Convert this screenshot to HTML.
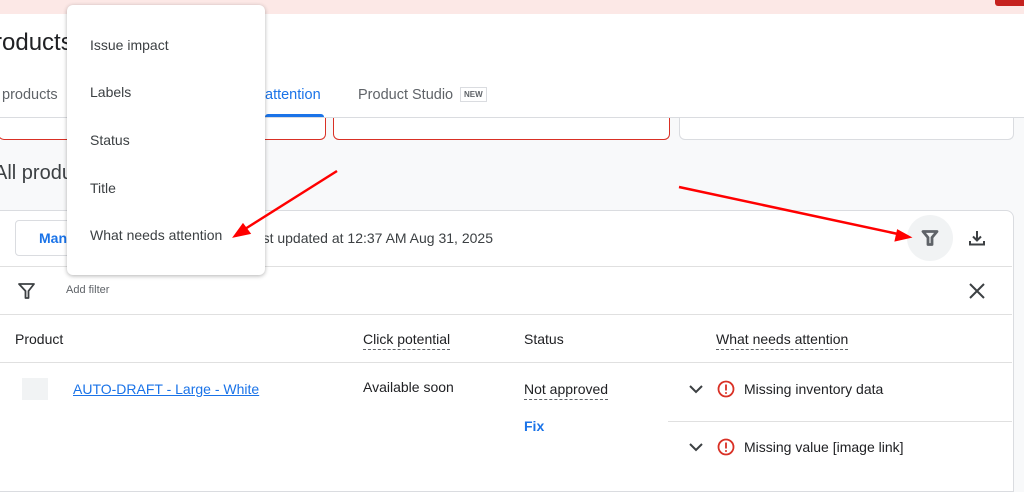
<!DOCTYPE html>
<html><head><style>
body{margin:0;width:1024px;height:478px;overflow:hidden;background:#f8f9fa;font-family:"Liberation Sans",Arial,sans-serif;color:#3c4043;position:relative}
.a{position:absolute}
</style></head><body>
<div class="a" style="left:0;top:0;width:1024px;height:14px;background:#fce8e6"></div>
<div class="a" style="left:995px;top:0;width:29px;height:6px;background:#c5221f;border-radius:0 0 0 3px"></div>
<div class="a" style="left:0;top:14px;width:1024px;height:103px;background:#fff;border-bottom:1px solid #dadce0"></div>
<div class="a" style="left:-6px;top:29px;font-size:24px;color:#202124">roducts</div>
<div class="a" style="left:2px;top:87px;font-size:14.5px;color:#5f6368">products</div>
<div class="a" style="left:265px;top:87px;font-size:14.5px;color:#1a73e8">attention</div>
<div class="a" style="left:265px;top:114px;width:59px;height:3px;background:#1a73e8;border-radius:3px 3px 0 0"></div>
<div class="a" style="left:358px;top:87px;font-size:14.5px;color:#5f6368">Product Studio</div>
<div class="a" style="left:460px;top:87px;font-size:8px;border:1px solid #dadce0;padding:2px 3px;color:#5f6368;font-weight:bold">NEW</div>
<div class="a" style="left:-2px;top:118px;width:326px;height:21px;background:#fff;border:1px solid #d93025;border-top:none;border-radius:0 0 6px 6px"></div>
<div class="a" style="left:333px;top:118px;width:335px;height:21px;background:#fff;border:1px solid #d93025;border-top:none;border-radius:0 0 6px 6px"></div>
<div class="a" style="left:679px;top:118px;width:333px;height:21px;background:#fff;border:1px solid #dadce0;border-top:none;border-radius:0 0 6px 6px"></div>
<div class="a" style="left:-6px;top:162px;font-size:20px;color:#3c4043">All products</div>
<div class="a" style="left:-1px;top:210px;width:1013px;height:280px;background:#fff;border:1px solid #dadce0;border-radius:0 8px 0 0"></div>
<div class="a" style="left:15px;top:220px;width:90px;height:34px;border:1px solid #dadce0;border-radius:4px"></div>
<div class="a" style="left:39px;top:230px;font-size:14px;color:#1a73e8;font-weight:bold">Manage</div>
<div class="a" style="left:247px;top:230px;font-size:14px;color:#3c4043">Last updated at 12:37 AM Aug 31, 2025</div>
<div class="a" style="left:907px;top:215px;width:46px;height:46px;border-radius:50%;background:#f1f3f4"></div>
<svg class="a" style="left:920px;top:228px" width="20" height="20" viewBox="0 0 20 20"><path d="M3 3.5h14l-5 6V16.5h-4v-7z" fill="none" stroke="#5f6368" stroke-width="2.8" stroke-linejoin="round"/></svg>
<svg class="a" style="left:967px;top:228px" width="20" height="20" viewBox="0 0 20 20"><path d="M10 3v9M6 8.5l4 4 4-4M3 13v3.5h14V13" fill="none" stroke="#3c4043" stroke-width="2"/></svg>
<div class="a" style="left:0;top:266px;width:1012px;height:1px;background:#e0e0e0"></div>
<svg class="a" style="left:17px;top:281px" width="20" height="20" viewBox="0 0 20 20"><path d="M2 3h15l-5.5 7V17h-3v-7z" fill="none" stroke="#3c4043" stroke-width="1.8" stroke-linejoin="round"/></svg>
<div class="a" style="left:66px;top:284px;font-size:11px;color:#5f6368">Add filter</div>
<svg class="a" style="left:968px;top:282px" width="18" height="18" viewBox="0 0 18 18"><path d="M2 2l14 14M16 2L2 16" stroke="#3c4043" stroke-width="2"/></svg>
<div class="a" style="left:0;top:314px;width:1012px;height:1px;background:#e0e0e0"></div>
<div class="a" style="left:15px;top:331px;font-size:14px;color:#202124">Product</div>
<div class="a" style="left:363px;top:331px;font-size:14px;color:#202124;border-bottom:1px dashed #5f6368;padding-bottom:2px">Click potential</div>
<div class="a" style="left:524px;top:331px;font-size:14px;color:#202124">Status</div>
<div class="a" style="left:716px;top:331px;font-size:14px;color:#202124;border-bottom:1px dashed #5f6368;padding-bottom:2px">What needs attention</div>
<div class="a" style="left:0;top:362px;width:1012px;height:1px;background:#e0e0e0"></div>
<div class="a" style="left:22px;top:378px;width:26px;height:22px;background:#f1f3f4"></div>
<div class="a" style="left:73px;top:381px;font-size:14px;color:#1a73e8;text-decoration:underline">AUTO-DRAFT - Large - White</div>
<div class="a" style="left:363px;top:379px;font-size:14px;color:#202124">Available soon</div>
<div class="a" style="left:524px;top:381px;font-size:14px;color:#202124;border-bottom:1px dashed #5f6368;padding-bottom:2px">Not approved</div>
<div class="a" style="left:524px;top:418px;font-size:14px;color:#1a73e8;font-weight:bold">Fix</div>
<div class="a" style="left:668px;top:421px;width:344px;height:1px;background:#e0e0e0"></div>
<svg class="a" style="left:688px;top:383px" width="16" height="12" viewBox="0 0 16 12"><path d="M2 3l6 6 6-6" fill="none" stroke="#3c4043" stroke-width="2"/></svg>
<svg class="a" style="left:688px;top:441px" width="16" height="12" viewBox="0 0 16 12"><path d="M2 3l6 6 6-6" fill="none" stroke="#3c4043" stroke-width="2"/></svg>
<svg class="a" style="left:717px;top:380px" width="18" height="18" viewBox="0 0 18 18"><circle cx="9" cy="9" r="7.5" fill="none" stroke="#d93025" stroke-width="1.8"/><path d="M9 4.5v6" stroke="#d93025" stroke-width="1.8"/><circle cx="9" cy="13" r="1" fill="#d93025"/></svg>
<svg class="a" style="left:717px;top:438px" width="18" height="18" viewBox="0 0 18 18"><circle cx="9" cy="9" r="7.5" fill="none" stroke="#d93025" stroke-width="1.8"/><path d="M9 4.5v6" stroke="#d93025" stroke-width="1.8"/><circle cx="9" cy="13" r="1" fill="#d93025"/></svg>
<div class="a" style="left:744px;top:381px;font-size:14px;color:#202124">Missing inventory data</div>
<div class="a" style="left:744px;top:439px;font-size:14px;color:#202124">Missing value [image link]</div>
<div class="a" style="left:67px;top:5px;width:198px;height:270px;background:#fff;border-radius:6px;box-shadow:0 1px 4px rgba(0,0,0,.3)"></div>
<div class="a" style="left:90px;top:37px;font-size:14px;color:#3c4043">Issue impact</div>
<div class="a" style="left:90px;top:84px;font-size:14px;color:#3c4043">Labels</div>
<div class="a" style="left:90px;top:132px;font-size:14px;color:#3c4043">Status</div>
<div class="a" style="left:90px;top:180px;font-size:14px;color:#3c4043">Title</div>
<div class="a" style="left:90px;top:227px;font-size:14px;color:#3c4043">What needs attention</div>
<svg class="a" style="left:0;top:0" width="1024" height="478"><g stroke="#f00" stroke-width="2.5" fill="#f00"><line x1="337" y1="171" x2="245" y2="229"/><path d="M235 236l8-11 6 8z"/><line x1="679" y1="187" x2="898" y2="234"/><path d="M909 237l-13 3 2-9z"/></g></svg>
</body></html>
